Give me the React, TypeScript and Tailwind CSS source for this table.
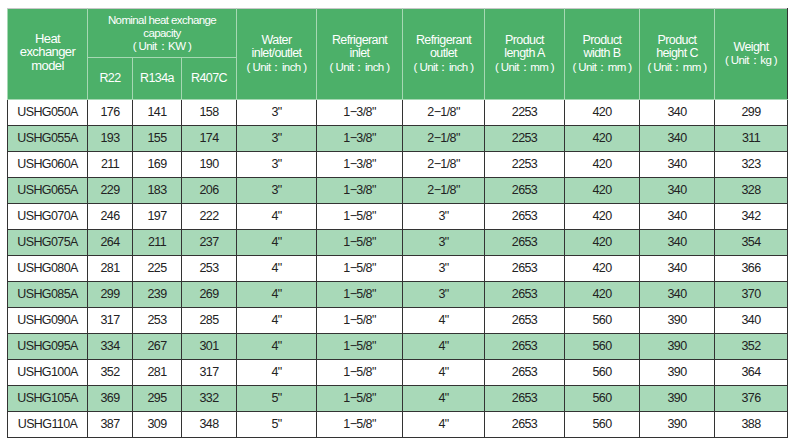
const rows: string[][] = [
  ['USHG050A', '176', '141', '158', '3"', '1\u22123/8"', '2\u22121/8"', '2253', '420', '340', '299'],
  ['USHG055A', '193', '155', '174', '3"', '1\u22123/8"', '2\u22121/8"', '2253', '420', '340', '311'],
  ['USHG060A', '211', '169', '190', '3"', '1\u22123/8"', '2\u22121/8"', '2253', '420', '340', '323'],
  ['USHG065A', '229', '183', '206', '3"', '1\u22123/8"', '2\u22121/8"', '2653', '420', '340', '328'],
  ['USHG070A', '246', '197', '222', '4"', '1\u22125/8"', '3"', '2653', '420', '340', '342'],
  ['USHG075A', '264', '211', '237', '4"', '1\u22125/8"', '3"', '2653', '420', '340', '354'],
  ['USHG080A', '281', '225', '253', '4"', '1\u22125/8"', '3"', '2653', '420', '340', '366'],
  ['USHG085A', '299', '239', '269', '4"', '1\u22125/8"', '3"', '2653', '420', '340', '370'],
  ['USHG090A', '317', '253', '285', '4"', '1\u22125/8"', '4"', '2653', '560', '390', '340'],
  ['USHG095A', '334', '267', '301', '4"', '1\u22125/8"', '4"', '2653', '560', '390', '352'],
  ['USHG100A', '352', '281', '317', '4"', '1\u22125/8"', '4"', '2653', '560', '390', '364'],
  ['USHG105A', '369', '295', '332', '5"', '1\u22125/8"', '4"', '2653', '560', '390', '376'],
  ['USHG110A', '387', '309', '348', '5"', '1\u22125/8"', '4"', '2653', '560', '390', '388'],
];

const widths = [80, 45, 49, 55, 80, 86, 82, 80, 75, 75, 73];

const th = 'border border-[#a6d8b3] bg-[#4cb069] text-white font-normal text-center align-middle p-0';

function Head({ title, unit }: { title: string[]; unit: string }) {
  return (
    <div className="leading-[13.5px]">
      {title.map((t) => (
        <div key={t} className="text-[12.5px]">{t}</div>
      ))}
      <div className="text-[11.5px]">{unit}</div>
    </div>
  );
}

export default function App() {
  return (
    <div className="bg-white w-[793px] h-[443px] pt-[8px] pl-[7px] tracking-[-0.6px]" style={{ fontFamily: '"Liberation Sans Narrow", "Liberation Sans", Arial, sans-serif' }}>
      <table className="table-fixed border-collapse w-[780px] text-[#222]">
        <colgroup>
          {widths.map((w, i) => (
            <col key={i} style={{ width: w }} />
          ))}
        </colgroup>
        <thead>
          <tr className="h-[49px]">
            <th rowSpan={2} className={th + ' border-t-[#c8c8c8]'}>
              <div className="text-[13px] leading-[13.5px] pb-1">Heat<br />exchanger<br />model</div>
            </th>
            <th colSpan={3} className={th + ' border-t-[#c8c8c8]'}>
              <div className="text-[11.5px] leading-[13px]">Nominal heat exchange<br />capacity<br />( Unit：KW )</div>
            </th>
            <th rowSpan={2} className={th + ' border-t-[#c8c8c8]'}><Head title={['Water', 'inlet/outlet']} unit="( Unit：inch )" /></th>
            <th rowSpan={2} className={th + ' border-t-[#c8c8c8]'}><Head title={['Refrigerant', 'inlet']} unit="( Unit：inch )" /></th>
            <th rowSpan={2} className={th + ' border-t-[#c8c8c8]'}><Head title={['Refrigerant', 'outlet']} unit="( Unit：inch )" /></th>
            <th rowSpan={2} className={th + ' border-t-[#c8c8c8]'}><Head title={['Product', 'length A']} unit="( Unit：mm )" /></th>
            <th rowSpan={2} className={th + ' border-t-[#c8c8c8]'}><Head title={['Product', 'width  B']} unit="( Unit：mm )" /></th>
            <th rowSpan={2} className={th + ' border-t-[#c8c8c8]'}><Head title={['Product', 'height C']} unit="( Unit：mm )" /></th>
            <th rowSpan={2} className={th + ' border-t-[#c8c8c8] border-r-[#333]'}><Head title={['Weight']} unit="( Unit：kg )" /></th>
          </tr>
          <tr className="h-[42px]">
            <th className={th + ' text-[12.5px]'}>R22</th>
            <th className={th + ' text-[12.5px]'}>R134a</th>
            <th className={th + ' text-[12.5px]'}>R407C</th>
          </tr>
        </thead>
        <tbody>
          {rows.map((r, i) => (
            <tr key={r[0]} className={'h-[26px] ' + (i % 2 ? 'bg-[#a8d9b8]' : 'bg-white')}>
              {r.map((c, j) => (
                <td key={j} className="border border-[#333] text-center text-[12.5px] p-0 align-middle">{c}</td>
              ))}
            </tr>
          ))}
        </tbody>
      </table>
    </div>
  );
}
